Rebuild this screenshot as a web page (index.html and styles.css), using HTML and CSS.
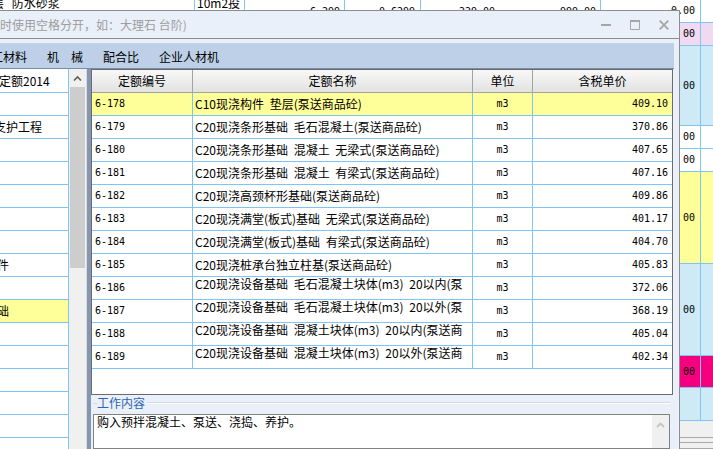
FILE: index.html
```html
<!DOCTYPE html>
<html lang="zh-CN">
<head>
<meta charset="utf-8">
<title>定额查询</title>
<link rel="stylesheet" href="styles.css">
</head>
<body>
<div class="desk">
  <div class="bg-left">
    <div class="bg-row">
      <div class="bg-cell c-name"><span class="wraptxt cut8">层 防水砂浆</span></div>
      <div class="bg-cell c-unit"><span class="wraptxt pad2">10m2投</span></div>
      <div class="bg-cell c-n1"><span class="mono">6.299</span></div>
      <div class="bg-cell c-n2"><span class="mono">0.6299</span></div>
      <div class="bg-cell c-n3"><span class="mono num-a">229.00</span><span class="mono num-b">999.00</span></div>
    </div>
  </div>
  <div class="bg-right">
    <div class="bg-r h23"><div class="ca mono">0.00</div><div class="cb"></div></div>
    <div class="bg-r h23 pink"><div class="ca mono">00</div><div class="cb"></div></div>
    <div class="bg-r h80 sky"><div class="ca mono">00</div><div class="cb"></div></div>
    <div class="bg-r h23"><div class="ca mono">00</div><div class="cb"></div></div>
    <div class="bg-r h23"><div class="ca mono">00</div><div class="cb"></div></div>
    <div class="bg-r h92 yellow"><div class="ca mono">00</div><div class="cb"></div></div>
    <div class="bg-r h92 sky"><div class="ca mono">00</div><div class="cb"></div></div>
    <div class="bg-r h32 magenta"><div class="ca mono">00</div><div class="cb"></div></div>
    <div class="bg-r h33 sky"><div class="ca mono"></div><div class="cb"></div></div>
    <div class="bg-hscroll"></div>
  </div>
</div>

<div class="win">
  <div class="titlebar">
    <span class="title">时使用空格分开，如：大理石 台阶)</span>
    <div class="ctrls">
      <svg width="10" height="10" viewBox="0 0 10 10"><rect x="0" y="4" width="10" height="2" fill="#a6a6a6"/></svg>
      <svg width="10" height="10" viewBox="0 0 10 10"><rect x="0" y="0" width="10" height="2" fill="#a6a6a6"/><path d="M0.5 1.5V9.5H9.5V1.5" fill="none" stroke="#a6a6a6" stroke-width="1"/></svg>
      <svg width="10" height="10" viewBox="0 0 10 10"><path d="M0.7 0.7L9.3 9.3M9.3 0.7L0.7 9.3" stroke="#a6a6a6" stroke-width="1.8"/></svg>
    </div>
  </div>
  <div class="tabs">
    <span class="tab tab-first">工材料</span>
    <span class="tab">机　械</span>
    <span class="tab">配合比</span>
    <span class="tab">企业人材机</span>
  </div>
  <div class="main">
    <div class="tree">
      <div class="trow"><span class="shift1">定额2014</span></div>
      <div class="trow"></div>
      <div class="trow"><span class="shift6">支护工程</span></div>
      <div class="trow"></div>
      <div class="trow"></div>
      <div class="trow"></div>
      <div class="trow"></div>
      <div class="trow"></div>
      <div class="trow"><span class="shift3">件</span></div>
      <div class="trow"></div>
      <div class="trow sel"><span class="shift3">础</span></div>
      <div class="trow"></div>
      <div class="trow"></div>
      <div class="trow"></div>
      <div class="trow"></div>
      <div class="trow"></div>
      <div class="trow"></div>
    </div>
    <div class="vscroll">
      <div class="sb-btn"><svg width="17" height="17" viewBox="0 0 17 17"><path d="M5 10.5L8.5 7L12 10.5" fill="none" stroke="#5e5e5e" stroke-width="1.6"/></svg></div>
      <div class="sb-thumb"></div>
    </div>
    <div class="splitter"></div>
    <div class="right">
      <div class="grid">
        <div class="thead">
          <div class="th">定额编号</div>
          <div class="th">定额名称</div>
          <div class="th">单位</div>
          <div class="th">含税单价</div>
        </div>
        <div class="tr sel">
          <div class="td code mono">6-178</div><div class="td name">C10现浇构件 垫层(泵送商品砼)</div><div class="td unit mono">m3</div><div class="td price mono">409.10</div>
        </div>
        <div class="tr">
          <div class="td code mono">6-179</div><div class="td name">C20现浇条形基础 毛石混凝土(泵送商品砼)</div><div class="td unit mono">m3</div><div class="td price mono">370.86</div>
        </div>
        <div class="tr">
          <div class="td code mono">6-180</div><div class="td name">C20现浇条形基础 混凝土 无梁式(泵送商品砼)</div><div class="td unit mono">m3</div><div class="td price mono">407.65</div>
        </div>
        <div class="tr">
          <div class="td code mono">6-181</div><div class="td name">C20现浇条形基础 混凝土 有梁式(泵送商品砼)</div><div class="td unit mono">m3</div><div class="td price mono">407.16</div>
        </div>
        <div class="tr">
          <div class="td code mono">6-182</div><div class="td name">C20现浇高颈杯形基础(泵送商品砼)</div><div class="td unit mono">m3</div><div class="td price mono">409.86</div>
        </div>
        <div class="tr">
          <div class="td code mono">6-183</div><div class="td name">C20现浇满堂(板式)基础 无梁式(泵送商品砼)</div><div class="td unit mono">m3</div><div class="td price mono">401.17</div>
        </div>
        <div class="tr">
          <div class="td code mono">6-184</div><div class="td name">C20现浇满堂(板式)基础 有梁式(泵送商品砼)</div><div class="td unit mono">m3</div><div class="td price mono">404.70</div>
        </div>
        <div class="tr">
          <div class="td code mono">6-185</div><div class="td name">C20现浇桩承台独立柱基(泵送商品砼)</div><div class="td unit mono">m3</div><div class="td price mono">405.83</div>
        </div>
        <div class="tr">
          <div class="td code mono">6-186</div><div class="td name top">C20现浇设备基础 毛石混凝土块体(m3) 20以内(泵</div><div class="td unit mono">m3</div><div class="td price mono">372.06</div>
        </div>
        <div class="tr">
          <div class="td code mono">6-187</div><div class="td name top">C20现浇设备基础 毛石混凝土块体(m3) 20以外(泵</div><div class="td unit mono">m3</div><div class="td price mono">368.19</div>
        </div>
        <div class="tr">
          <div class="td code mono">6-188</div><div class="td name top">C20现浇设备基础 混凝土块体(m3) 20以内(泵送商</div><div class="td unit mono">m3</div><div class="td price mono">405.04</div>
        </div>
        <div class="tr">
          <div class="td code mono">6-189</div><div class="td name top">C20现浇设备基础 混凝土块体(m3) 20以外(泵送商</div><div class="td unit mono">m3</div><div class="td price mono">402.34</div>
        </div>
      </div>
      <div class="group">
        <div class="legend"><span class="legend-text">工作内容</span><span class="legend-line"></span></div>
        <div class="memo">
          <div class="memo-text">购入预拌混凝土、泵送、浇捣、养护。</div>
          <div class="memo-sb"><svg width="17" height="17" viewBox="0 0 17 17"><path d="M5 10L8.5 6.5L12 10" fill="none" stroke="#c4c4c4" stroke-width="1.8"/></svg></div>
        </div>
      </div>
    </div>
  </div>
</div>
</body>
</html>
```

FILE: styles.css
```css
* { box-sizing: border-box; margin: 0; padding: 0; }
html, body { width: 713px; height: 449px; overflow: hidden; }
body {
  position: relative;
  background: #fff;
  font-family: "Noto Sans CJK SC", "Liberation Sans", sans-serif;
  font-size: 12px;
  line-height: 14px;
  color: #000;
}
.mono { font-family: "DejaVu Sans Mono", "Liberation Mono", monospace; font-size: 10px; }

/* background application */
.desk { display: flex; height: 449px; }
.bg-left { width: 601px; }
.bg-row { display: flex; height: 23px; }
.bg-cell {
  height: 23px;
  border-right: 1px solid #7fc6f5;
  display: flex;
  align-items: center;
  overflow: hidden;
  white-space: nowrap;
}
.c-name { width: 195px; }
.c-unit { width: 50px; }
.c-n1 { width: 100px; justify-content: flex-end; padding-right: 4px; }
.c-n2 { width: 76px; justify-content: flex-end; padding-right: 5px; }
.c-n3 { width: 180px; }
.num-a { width: 74px; text-align: right; }
.num-b { flex: 1; text-align: right; padding-right: 4px; }
.wraptxt { align-self: flex-start; margin-top: -4px; word-spacing: 5px; }
.cut8 { margin-left: -8px; }
.pad2 { margin-left: 2px; }

.bg-right { width: 112px; display: flex; flex-direction: column; }
.bg-r { display: flex; border-bottom: 1px solid #7fc6f5; flex: none; }
.h23 { height: 23px; }
.h80 { height: 80px; }
.h92 { height: 92px; }
.h32 { height: 32px; }
.h33 { height: 33px; }
.ca {
  width: 100px;
  border-right: 1px solid #7fc6f5;
  display: flex;
  align-items: center;
  justify-content: flex-end;
  padding-right: 5px;
}
.cb { flex: 1; }
.pink { background: #f1d9f1; }
.sky { background: #cfeaf7; }
.yellow { background: #ffff99; }
.magenta { background: #f5007f; }
.bg-hscroll {
  flex: 1;
  background: linear-gradient(to bottom,
    #f0f0f0 0 16px, #a8a8a8 16px 17px,
    #f0f0f0 17px 21px, #a8a8a8 21px 22px,
    #f0f0f0 22px 27px, #a8a8a8 27px 28px);
}

/* dialog window */
.win {
  position: absolute;
  left: 0;
  top: 10px;
  width: 680px;
  height: 439px;
  background: #e9f0f9;
  border-top: 1px solid #8c8c8c;
  border-right: 1px solid #8c8c8c;
  display: flex;
  flex-direction: column;
}
.titlebar {
  flex: none;
  height: 28px;
  border-bottom: 1px solid #8c8c8c;
  display: flex;
  align-items: center;
  justify-content: space-between;
  padding-right: 10px;
}
.title { color: #9d9d9d; white-space: nowrap; }
.ctrls { display: flex; gap: 19px; align-items: center; }
.ctrls svg { display: block; }

.tabs {
  flex: none;
  margin-top: 4px;
  margin-right: 5px;
  height: 26px;
  padding-top: 2px;
  background: #bdd0e7;
  border-bottom: 1px solid #7b8ba6;
  display: flex;
  align-items: center;
  overflow: hidden;
}
.tab { padding: 0 10px; white-space: nowrap; }
.tab-first { margin-left: -19px; }

.main { flex: 1; min-height: 0; display: flex; margin-right: 6px; }

.tree {
  width: 69px;
  flex: none;
  background: #fff;
  border-right: 1px solid #80c4f2;
  padding-top: 1px;
  overflow: hidden;
}
.trow {
  height: 23px;
  border-bottom: 1px solid #80c4f2;
  display: flex;
  align-items: center;
  white-space: nowrap;
  overflow: hidden;
}
.trow.sel { background: #ffff99; }
.shift1 { margin-left: -1px; }
.shift3 { margin-left: -3px; }
.shift6 { margin-left: -6px; }

.vscroll {
  width: 18px;
  flex: none;
  background: #f0f0f0;
  border-right: 1px solid #dcdcdc;
  padding-top: 1px;
}
.sb-btn svg { display: block; }
.sb-thumb { width: 15px; height: 181px; margin-left: 1px; background: #cdcdcd; }
.splitter { width: 4px; flex: none; background: #8596b1; }

.right { width: 582px; flex: none; display: flex; flex-direction: column; }
.grid {
  flex: none;
  height: 326px;
  background: #fff;
  border: 1px solid #6b6b6b;
}
.thead, .tr {
  display: grid;
  grid-template-columns: 101px 280px 60px 139px;
  height: 23px;
}
.th {
  border-right: 1px solid #a3a3a3;
  border-bottom: 1px solid #a3a3a3;
  background: linear-gradient(#f8f8f8, #e2e2e2);
  display: flex;
  align-items: center;
  justify-content: center;
}
.td {
  border-right: 1px solid #7fc4f4;
  border-bottom: 1px solid #7fc4f4;
  display: flex;
  align-items: center;
  overflow: hidden;
  white-space: nowrap;
}
.th:last-child, .td:last-child { border-right: none; }
.tr.sel .td { background: #ffff99; }
.code { padding-left: 3px; }
.name { padding-left: 2px; word-spacing: 3px; }
.name.top { align-items: flex-start; }
.unit { justify-content: center; }
.price { justify-content: flex-end; padding-right: 4px; }

.group {
  flex: 1;
  min-height: 0;
  display: flex;
  flex-direction: column;
  padding: 0 3px 0 2px;
}
.legend { flex: none; height: 16px; display: flex; align-items: center; }
.legend::before {
  content: "";
  width: 4px;
  border-top: 1px solid #d3dae4;
}
.legend-text { color: #2e63b5; }
.legend-line { flex: 1; margin-left: 2px; border-top: 1px solid #d3dae4; border-bottom: 1px solid #fff; }
.memo {
  flex: 1;
  margin-top: 3px;
  background: #fff;
  border: 1px solid #828282;
  display: flex;
}
.memo-text { flex: 1; padding: 0 3px; }
.memo-sb { width: 17px; background: #f0f0f0; padding-top: 2px; }
.memo-sb svg { display: block; }
```
